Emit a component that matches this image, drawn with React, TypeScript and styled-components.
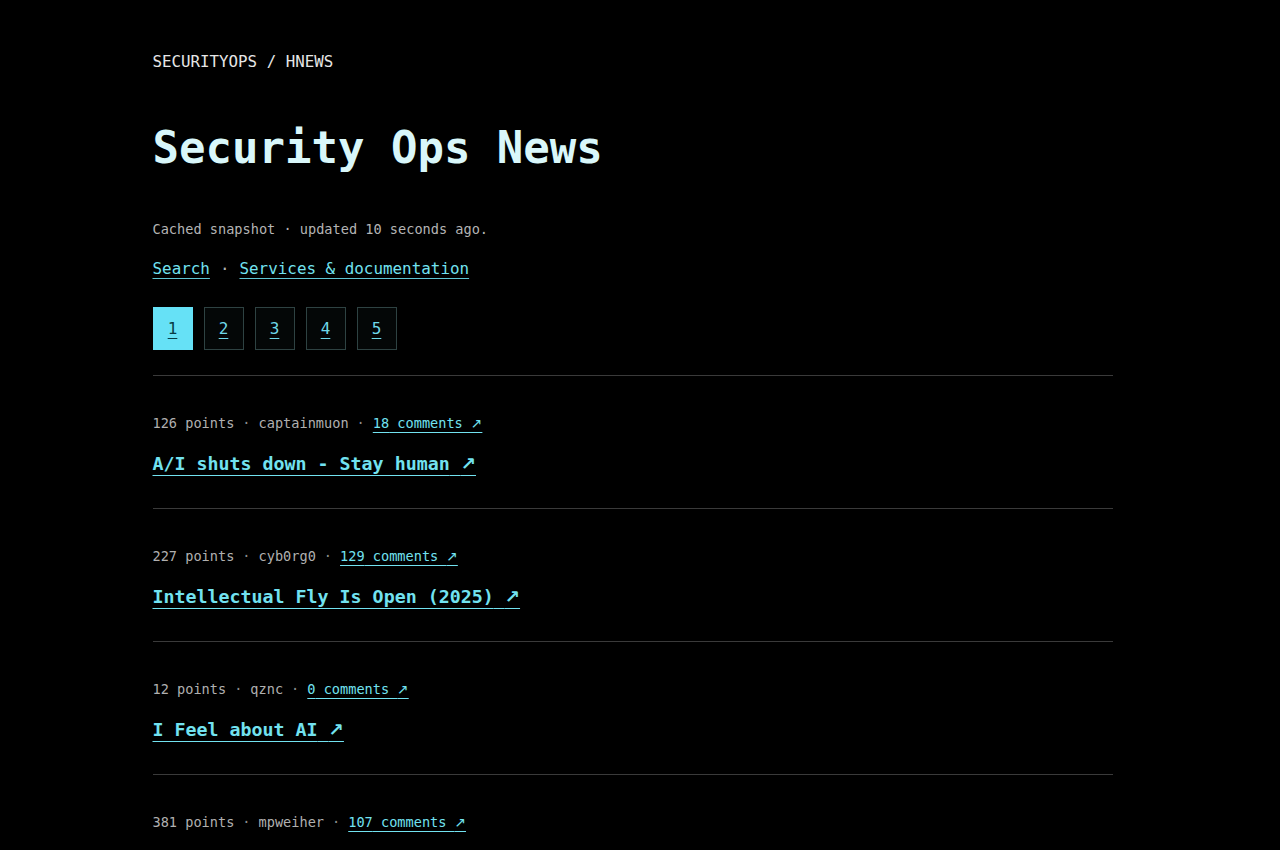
import styled, { createGlobalStyle } from 'styled-components';

type Story = {
	points: number;
	user: string;
	comments: number;
	title: string;
};

const stories: Story[] = [
	{ points: 126, user: 'captainmuon', comments: 18, title: 'A/I shuts down - Stay human' },
	{ points: 227, user: 'cyb0rg0', comments: 129, title: 'Intellectual Fly Is Open (2025)' },
	{ points: 12, user: 'qznc', comments: 0, title: 'I Feel about AI' },
	{ points: 381, user: 'mpweiher', comments: 107, title: 'The Unreasonable Effectiveness of Plain Text' },
	{ points: 94, user: 'tptacek', comments: 41, title: 'Rotating Secrets Without Downtime' },
	{ points: 58, user: 'jandeboevrie', comments: 12, title: 'Reverse Engineering a Router Firmware Update' },
	{ points: 203, user: 'ingve', comments: 76, title: 'Why Your Logs Are Lying to You' },
	{ points: 41, user: 'walterbell', comments: 9, title: 'Passkeys in Practice: One Year Later' },
	{ points: 167, user: 'zdw', comments: 53, title: 'Supply Chain Attacks via CI Caches' },
	{ points: 29, user: 'bookofjoe', comments: 3, title: 'A Field Guide to Incident Postmortems' },
];

const pages = [1, 2, 3, 4, 5];

// the reference was taken with a classic 15px scrollbar; keep the same content width
const GlobalStyle = createGlobalStyle`
	html {
		color-scheme: dark;
		background: #000;
	}
	body {
		margin: 0;
		padding-right: 15px;
		background: #000;
		color: #e4e4e4;
		font-family: 'DejaVu Sans Mono', 'Liberation Mono', monospace;
	}
`;

const App = () => {
	return (
		<>
			<GlobalStyle />
			<Wrapper>
				<Crumb>SECURITYOPS / HNEWS</Crumb>
				<Title>Security Ops News</Title>
				<Status>Cached snapshot · updated 10 seconds ago.</Status>
				<NavLinks>
					<a href="#">Search</a>
					<Dot>·</Dot>
					<a href="#">Services &amp; documentation</a>
				</NavLinks>
				<Pager>
					{pages.map((p) => (
						<PageButton key={p} href="#" $active={p === 1}>
							{p}
						</PageButton>
					))}
				</Pager>
				<List>
					{stories.map((s) => (
						<Item key={s.title}>
							<Meta>
								{s.points} points<Sep>·</Sep>
								{s.user}
								<Sep>·</Sep>
								<a href="#">
									{s.comments} comments <Arrow>↗</Arrow>
								</a>
							</Meta>
							<StoryTitle href="#">
								{s.title} <Arrow>↗</Arrow>
							</StoryTitle>
						</Item>
					))}
				</List>
				<Footer>Served from cache · securityops/hnews</Footer>
			</Wrapper>
		</>
	);
};

const Wrapper = styled.main`
	width: 960px;
	margin: 0 auto;
	padding: 50px 0 80px;
`;

const Crumb = styled.div`
	font-size: 15.8px;
	line-height: 24px;
	color: #e6e6e6;
`;

const Title = styled.h1`
	margin: 50px 0 0;
	font-size: 44px;
	line-height: 48px;
	font-weight: 700;
	color: #d9f7fa;
`;

const Status = styled.p`
	margin: 47px 0 0;
	font-size: 13.6px;
	line-height: 20px;
	color: #b4b4b4;
`;

const NavLinks = styled.div`
	margin-top: 18px;
	font-size: 15.9px;
	line-height: 24px;
	display: flex;
	align-items: center;
	a {
		color: #72e2f0;
		text-decoration: underline;
		text-underline-offset: 4px;
		text-decoration-color: #5fc4d2;
	}
`;

const Dot = styled.span`
	color: #b4b4b4;
	margin: 0 10px;
`;

const Pager = styled.nav`
	margin-top: 26px;
	display: flex;
	gap: 11px;
	padding-bottom: 25px;
`;

const PageButton = styled.a<{ $active?: boolean }>`
	display: flex;
	align-items: center;
	justify-content: center;
	width: 40px;
	height: 43px;
	box-sizing: border-box;
	font-size: 16px;
	border: 1px solid ${(p) => (p.$active ? '#66e1f6' : '#2e4242')};
	background: ${(p) => (p.$active ? '#66e1f6' : '#040707')};
	color: ${(p) => (p.$active ? '#083c44' : '#6fd8e8')};
	text-decoration: underline;
	text-underline-offset: 4px;
`;

const List = styled.section`
	display: flex;
	flex-direction: column;
`;

const Item = styled.article`
	border-top: 1px solid #3a3a3a;
	padding: 37px 0 31px;
	display: flex;
	flex-direction: column;
	gap: 18px;
`;

const Meta = styled.div`
	font-size: 13.6px;
	line-height: 20px;
	color: #b0b0b0;
	a {
		color: #72e2f0;
		text-decoration: underline;
		text-underline-offset: 4px;
	}
`;

const Sep = styled.span`
	margin: 0 8px;
	color: #8c8c8c;
`;

const Arrow = styled.span`
	font-family: 'DejaVu Sans', sans-serif;
`;

const StoryTitle = styled.a`
	align-self: flex-start;
	font-size: 18.3px;
	line-height: 26px;
	font-weight: 700;
	color: #72e2f0;
	text-decoration: underline;
	text-decoration-thickness: 1px;
	text-underline-offset: 5px;
`;

const Footer = styled.footer`
	border-top: 1px solid #3a3a3a;
	padding-top: 32px;
	font-size: 13.6px;
	color: #8c8c8c;
`;

export default App;
